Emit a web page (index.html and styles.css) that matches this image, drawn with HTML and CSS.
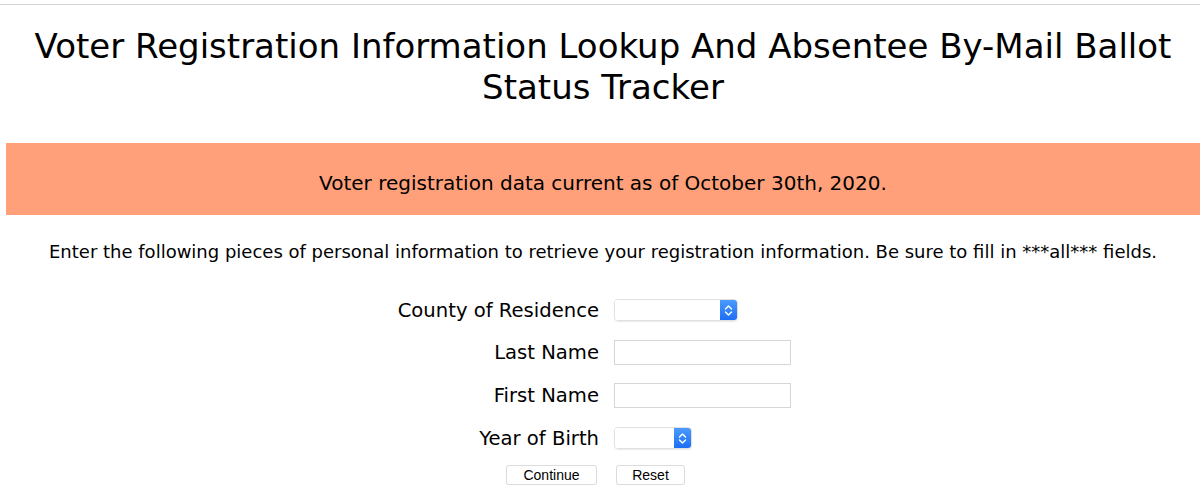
FILE: index.html
```html
<!DOCTYPE html>
<html>
<head>
<meta charset="utf-8">
<link rel="stylesheet" href="styles.css">
</head>
<body>
<div class="topline"></div>
<div class="page">
  <h1 class="title">Voter Registration Information Lookup And Absentee By-Mail Ballot Status Tracker</h1>
  <div class="banner">Voter registration data current as of October 30th, 2020.</div>
  <p class="intro">Enter the following pieces of personal information to retrieve your registration information. Be sure to fill in ***all*** fields.</p>
  <form class="form">
    <label class="lbl">County of Residence</label>
    <div class="ctl"><span class="sel sel-county"><select></select><span class="arrow"><svg width="9" height="13" viewBox="0 0 9 13"><path d="M1.5 5 L4.5 2 L7.5 5 M1.5 8 L4.5 11 L7.5 8" fill="none" stroke="#fff" stroke-width="1.4" stroke-linecap="round" stroke-linejoin="round"/></svg></span></span></div>
    <label class="lbl">Last Name</label>
    <div class="ctl"><input class="txt" type="text"></div>
    <label class="lbl">First Name</label>
    <div class="ctl"><input class="txt" type="text"></div>
    <label class="lbl">Year of Birth</label>
    <div class="ctl"><span class="sel sel-year"><select></select><span class="arrow"><svg width="9" height="13" viewBox="0 0 9 13"><path d="M1.5 5 L4.5 2 L7.5 5 M1.5 8 L4.5 11 L7.5 8" fill="none" stroke="#fff" stroke-width="1.4" stroke-linecap="round" stroke-linejoin="round"/></svg></span></span></div>
    <div class="btncell left"><button type="button" class="btn btn-continue">Continue</button></div>
    <div class="btncell"><button type="reset" class="btn btn-reset">Reset</button></div>
  </form>
</div>
</body>
</html>
```
FILE: styles.css
```css
html, body {
  margin: 0;
  padding: 0;
  background: #fff;
}
body {
  font-family: "DejaVu Sans", Verdana, sans-serif;
  color: #000;
}
.topline {
  margin-top: 4px;
  border-top: 1px solid #d4d4d4;
}
.page {
  margin-left: 6px;
}
.title {
  margin: 21px 0 0 0;
  font-size: 34px;
  line-height: 41px;
  font-weight: normal;
  text-align: center;
}
.banner {
  box-sizing: border-box;
  margin-top: 35px;
  height: 72px;
  padding-top: 7px;
  background: #ffa07a;
  font-size: 20px;
  display: flex;
  align-items: center;
  justify-content: center;
}
.intro {
  margin: 25px 0 0 0;
  font-size: 18px;
  line-height: 24px;
  text-align: center;
}
.form {
  margin-top: 25px;
  display: grid;
  grid-template-columns: 593px auto;
  grid-template-rows: 42px 43px 43px 42px auto;
  column-gap: 15px;
  row-gap: 0;
}
.lbl {
  font-size: 19.6px;
  text-align: right;
  display: flex;
  align-items: center;
  justify-content: flex-end;
}
.ctl {
  display: flex;
  align-items: center;
}
.txt {
  box-sizing: border-box;
  width: 177px;
  height: 25px;
  border: 1px solid #d6d6d6;
  margin: 0;
  padding: 0 4px;
  background: #fff;
}
.sel {
  display: inline-flex;
  box-sizing: border-box;
  height: 22px;
  border: 1px solid #e0e0e0;
  border-radius: 4px;
  box-shadow: 0 1px 1px rgba(0,0,0,0.08);
  overflow: hidden;
}
.sel select {
  appearance: none;
  -webkit-appearance: none;
  border: none;
  background: #fff;
  margin: 0;
  padding: 0;
  flex: 1;
  outline: none;
}
.sel-county { width: 124px; }
.sel-year { width: 78px; }
.arrow {
  width: 17px;
  display: flex;
  align-items: center;
  justify-content: center;
  background: linear-gradient(#4a9bfd, #1c6ef5);
}
.btncell {
  padding-top: 6px;
  display: flex;
}
.btncell.left {
  justify-content: flex-end;
}
.btn {
  box-sizing: border-box;
  height: 20px;
  margin: 0;
  padding: 0;
  border: 1px solid #dcdcdc;
  border-radius: 3px;
  background: #fff;
  font-family: "Liberation Sans", Arial, sans-serif;
  font-size: 14px;
  line-height: 18px;
  color: #000;
  box-shadow: 0 1px 1px rgba(0,0,0,0.06);
}
.btn-continue {
  width: 91px;
  margin-right: 2px;
}
.btn-reset {
  width: 69px;
  margin-left: 2px;
}
```
